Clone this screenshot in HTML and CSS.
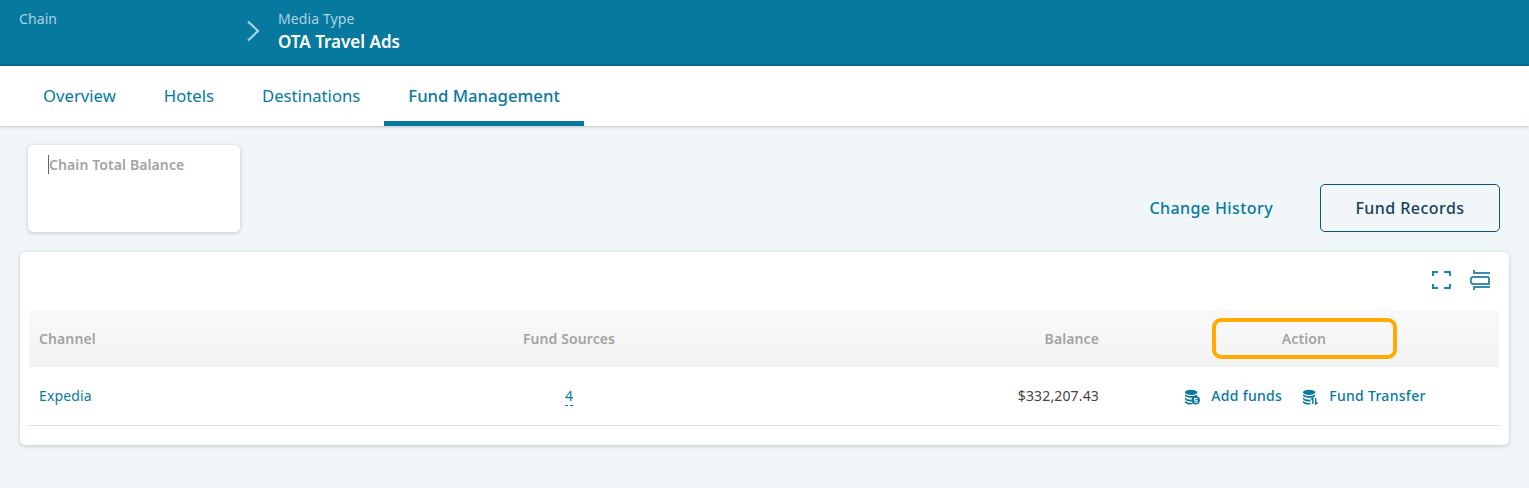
FILE: index.html
```html
<!DOCTYPE html>
<html lang="en">
<head>
  <meta charset="UTF-8" />
  <title>Fund Management</title>
  <link rel="stylesheet" href="styles.css">
</head>
<body>

  <!-- Breadcrumb header -->
  <header class="top-bar">
    <div class="crumb crumb-chain">
      <span class="crumb-label">Chain</span>
    </div>
    <svg class="crumb-arrow" width="14" height="22" viewBox="0 0 14 22">
      <path d="M2 1.500 L12 11 L2 20.500" fill="none" stroke="#a9d3e0" stroke-width="2.200"/>
    </svg>
    <div class="crumb">
      <span class="crumb-label">Media Type</span>
      <span class="crumb-value">OTA Travel Ads</span>
    </div>
  </header>

  <!-- Tabs -->
  <nav class="tabs">
    <a class="tab">Overview</a>
    <a class="tab">Hotels</a>
    <a class="tab">Destinations</a>
    <a class="tab tab-active">Fund Management</a>
  </nav>

  <main class="content">
    <div class="summary-row">
      <div class="balance-card">
        <span class="balance-title">Chain Total Balance</span>
      </div>
      <div class="summary-actions">
        <a class="history-link">Change History</a>
        <button class="records-btn">Fund Records</button>
      </div>
    </div>

    <section class="panel">
      <div class="panel-tools">
        <svg width="20" height="20" viewBox="0 0 20 20" fill="none" stroke="#1a86ab" stroke-width="2">
          <path d="M2 6 V2 H7 M13 2 H19 V6 M2 14 V18 H7 M13 18 H19 V14"/>
        </svg>
        <svg width="20" height="20" viewBox="0 0 20 20" fill="none" stroke="#3b8dab" stroke-width="2">
          <path d="M4 0 V3 H20 M19 7 H3 C0 7 0 14 3 14 H19 V7 M4 20 V17 H20"/>
        </svg>
      </div>

      <div class="table-row table-head">
        <div class="cell">Channel</div>
        <div class="cell cell-center">Fund Sources</div>
        <div class="cell cell-right">Balance</div>
        <div class="cell cell-center"><span class="action-mark">Action</span></div>
      </div>
      <div class="table-row table-body">
        <div class="cell"><a class="link">Expedia</a></div>
        <div class="cell cell-center"><a class="link source-count">4</a></div>
        <div class="cell cell-right balance-value">$332,207.43</div>
        <div class="cell cell-center action-links">
          <a class="action-link">
            <svg width="15" height="16" viewBox="0 0 16 16">
              <ellipse cx="6.500" cy="3" rx="6.500" ry="2.800" fill="#07799f"/>
              <path d="M0 5 C2 7.500 11 7.500 13 5 V7 C11 9.500 2 9.500 0 7 Z M0 8.500 C2 11 6 11 8 10.700 V12.500 C6 13 2 13 0 10.500 Z M0 12 C2 14.300 6 14.500 8 14.200 V15.800 C5 16.200 2 15.800 0 14 Z" fill="#07799f"/>
              <circle cx="11.500" cy="11.500" r="4.500" fill="#07799f"/>
              <path d="M13.300 9.500 H10.200 V11.500 H12.800 V13.500 H9.800" fill="none" stroke="#fff" stroke-width="1.100"/>
            </svg>
            Add funds
          </a>
          <a class="action-link">
            <svg width="15" height="16" viewBox="0 0 16 16">
              <ellipse cx="6.500" cy="3" rx="6.500" ry="2.800" fill="#07799f"/>
              <path d="M0 5 C2 7.500 11 7.500 13 5 V7 C11 9.500 2 9.500 0 7 Z M0 8.500 C2 11 6 11 8 10.700 V12.500 C6 13 2 13 0 10.500 Z M0 12 C2 14.300 6 14.500 8 14.200 V15.800 C5 16.200 2 15.800 0 14 Z" fill="#07799f"/>
              <path d="M10.500 15.500 V9 L8.800 10.700 M13.500 9 V15.500 L15.500 13.500" fill="none" stroke="#07799f" stroke-width="1.500"/>
            </svg>
            Fund Transfer
          </a>
        </div>
      </div>
    </section>
  </main>

</body>
</html>
```

FILE: styles.css
```css
* {
  box-sizing: border-box;
}

body {
  margin: 0;
  height: 488px;
  overflow: hidden;
  background-color: #f1f6f9;
  font-family: "Noto Sans", "Open Sans", sans-serif;
  font-size: 14px;
  color: #333;
}

.top-bar {
  height: 66px;
  background-color: #07799f;
  border-bottom: 2px solid #066f92;
  display: flex;
  align-items: flex-start;
  padding: 9px 0 0 19px;
}

.crumb {
  display: flex;
  flex-direction: column;
}

.crumb-chain {
  width: 227px;
}

.crumb-label {
  color: #a9d3e0;
  font-size: 14px;
  line-height: 19px;
  letter-spacing: 0.1px;
}

.crumb-value {
  color: #fff;
  font-size: 17px;
  font-weight: 600;
  line-height: 22px;
  margin-top: 3px;
}

.crumb-arrow {
  margin-top: 11px;
  margin-right: 18px;
}

.tabs {
  height: 60px;
  background-color: #fff;
  box-shadow: 0 1px 3px rgba(0, 0, 0, 0.2);
  display: flex;
  padding-left: 19px;
}

.tab {
  padding: 18px 24px 0;
  font-size: 16.700px;
  line-height: 24px;
  color: #07799f;
}

.tab-active {
  font-weight: 500;
  border-bottom: 5px solid #07799f;
}

.content {
  padding: 19px 20px 0;
}

.summary-row {
  display: flex;
  justify-content: space-between;
  align-items: flex-end;
}

.balance-card {
  width: 212px;
  height: 87px;
  margin-left: 8px;
  padding: 9px 20px;
  background-color: #fff;
  border-radius: 5px;
  box-shadow: 0 1px 4px rgba(0, 0, 0, 0.2);
}

.balance-title {
  color: #a3a3a3;
  font-size: 14px;
  font-weight: 600;
  line-height: 19px;
  letter-spacing: 0.1px;
  border-left: 1px solid #666;
  display: inline-block;
  margin-top: 1px;
}

.summary-actions {
  display: flex;
  align-items: center;
  gap: 47px;
  margin-right: 9px;
}

.history-link {
  color: #07799f;
  font-size: 16px;
  font-weight: 500;
  letter-spacing: 0.4px;
}

.records-btn {
  width: 180px;
  height: 48px;
  background: transparent;
  border: 1px solid #0a5578;
  border-radius: 5px;
  color: #17405e;
  font-family: inherit;
  font-size: 16px;
  font-weight: 500;
  letter-spacing: 0.45px;
}

.panel {
  height: 193px;
  margin-top: 20px;
  padding: 0 10px 0 9px;
  width: 1489px;
  background-color: #fff;
  border-radius: 5px;
  box-shadow: 0 1px 4px rgba(0, 0, 0, 0.2);
}

.panel-tools {
  height: 58px;
  display: flex;
  justify-content: flex-end;
  align-items: flex-start;
  gap: 19px;
  padding: 18px 9px 0 0;
}

.table-row {
  display: grid;
  grid-template-columns: 371px 338px 371px 390px;
  align-items: center;
}

.table-head {
  height: 57px;
  background: linear-gradient(#f9f9f9, #f3f3f3);
  color: #a3a3a3;
  font-weight: 600;
  letter-spacing: 0.1px;
}

.table-body {
  height: 59px;
  border-bottom: 1px solid #dcdcdc;
  padding-bottom: 2px;
  letter-spacing: 0.15px;
}

.cell {
  padding: 0 10px;
  line-height: 19px;
}

.cell-center {
  text-align: center;
}

.cell-right {
  text-align: right;
}

.action-mark {
  display: block;
  width: 185px;
  height: 41px;
  margin: 0 auto;
  line-height: 33px;
  border: 4px solid #ffab00;
  border-radius: 9px;
}

.link {
  color: #07799f;
}

.source-count {
  border-bottom: 1px dashed #07799f;
}

.balance-value {
  color: #444;
}

.action-links {
  display: flex;
  justify-content: center;
  gap: 21px;
  padding-left: 13px;
}

.action-link {
  display: flex;
  align-items: center;
  gap: 11px;
  color: #07799f;
  font-weight: 500;
  letter-spacing: 0.3px;
}

.action-link svg {
  margin-top: 4px;
}
```
